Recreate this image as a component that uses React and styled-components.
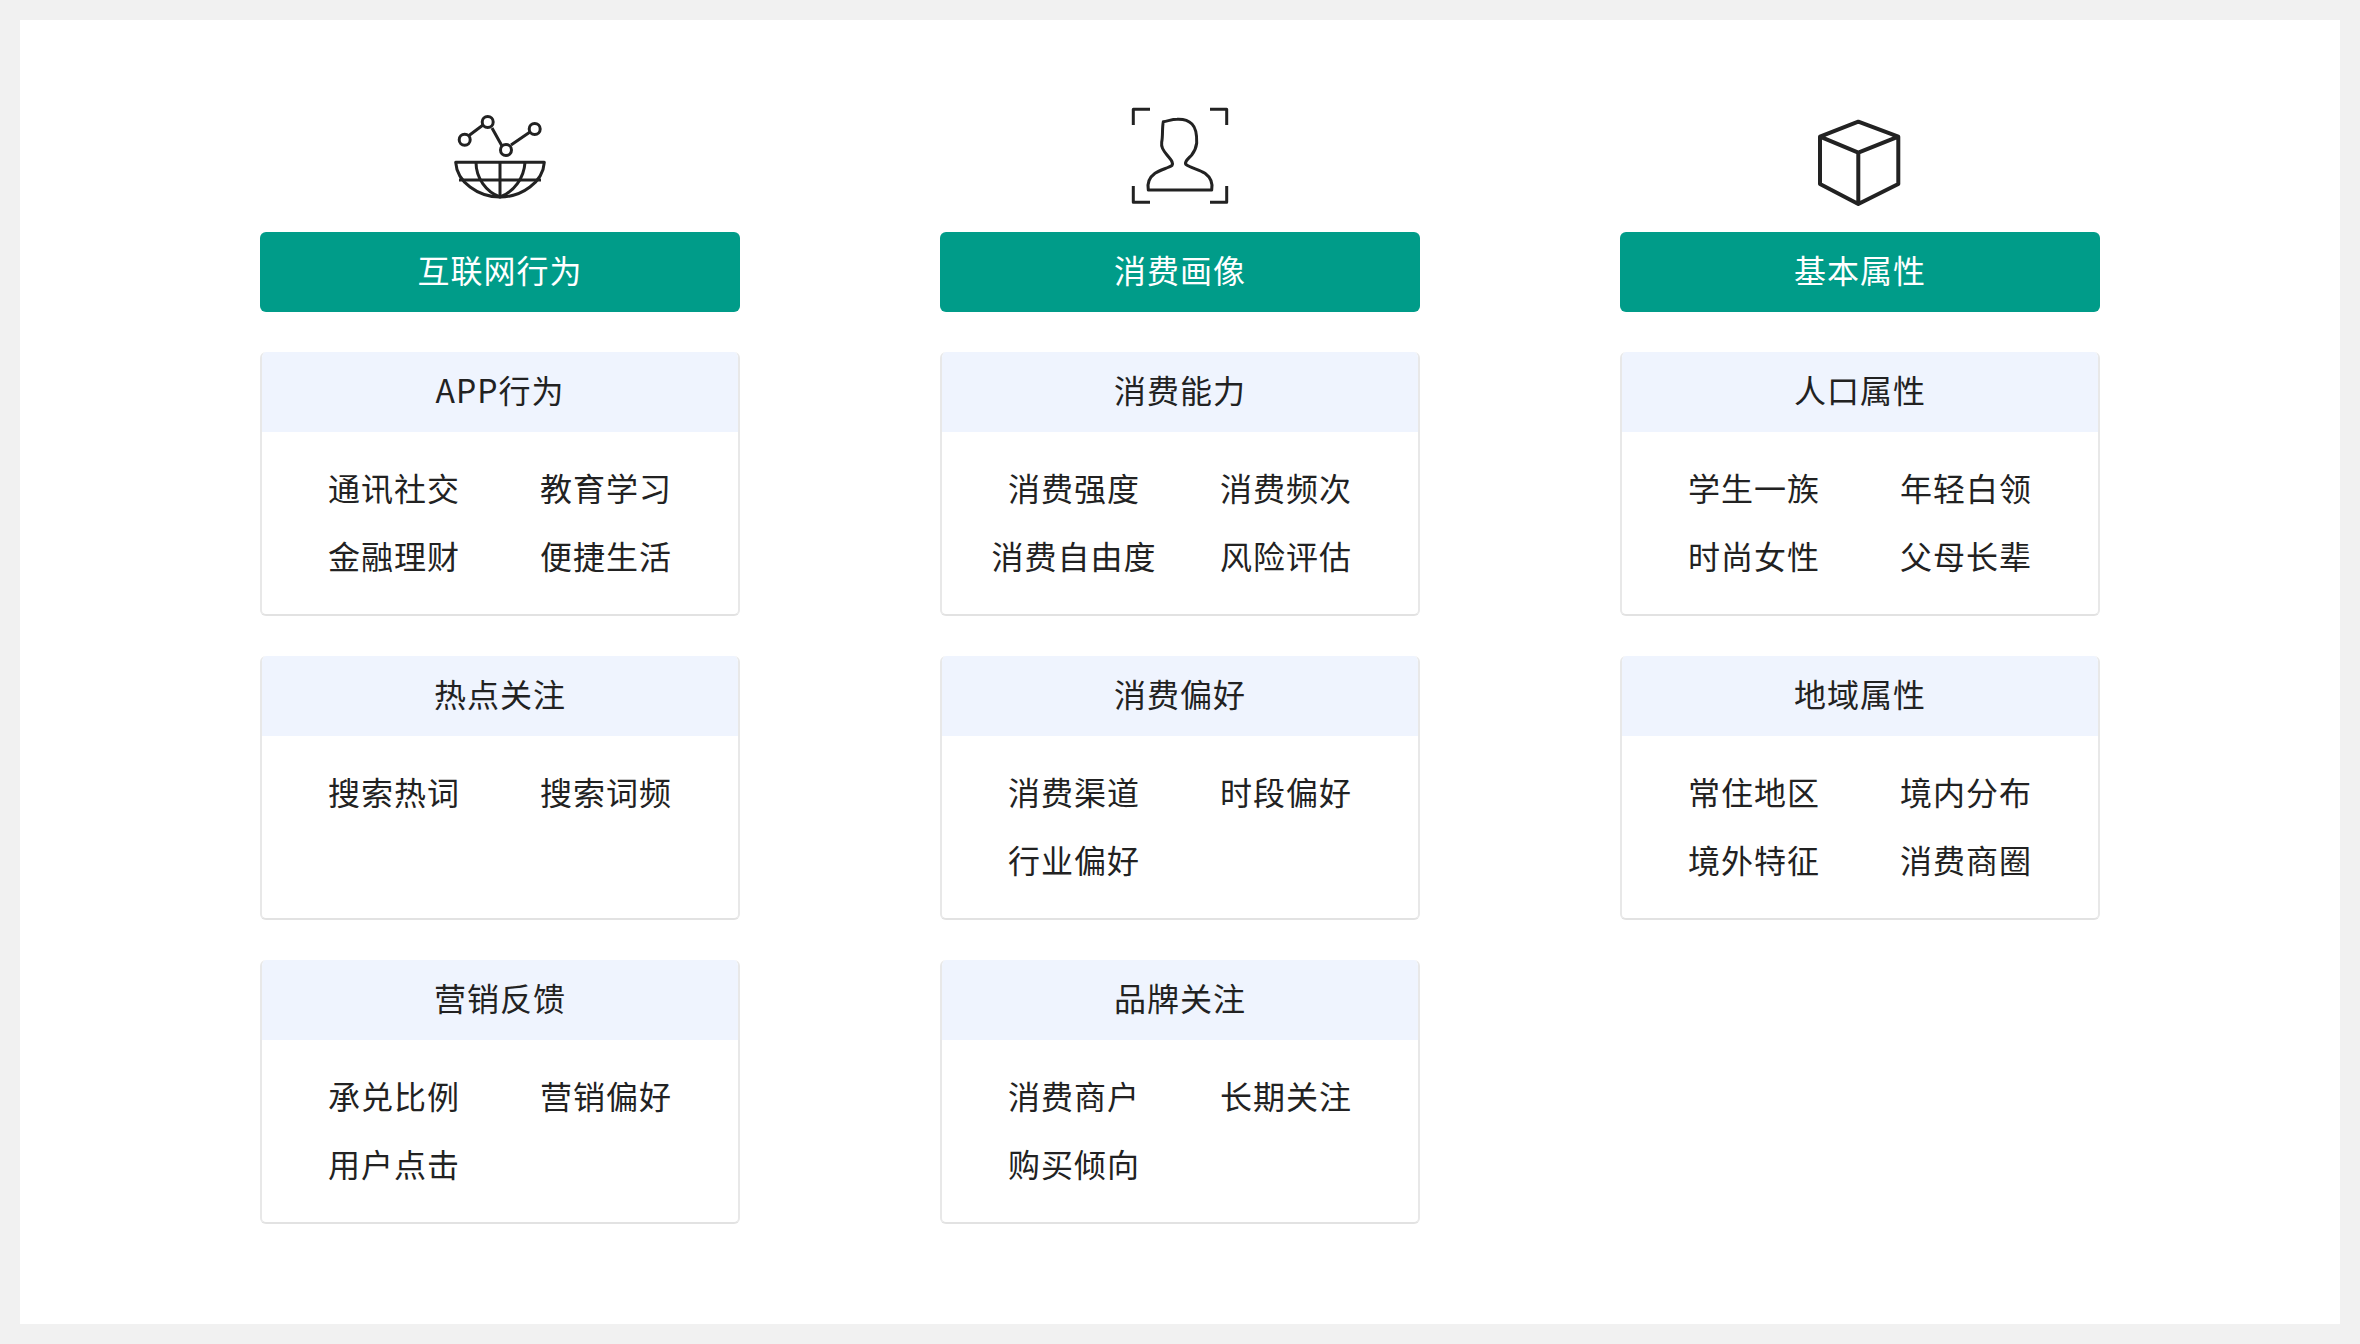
import styled, { createGlobalStyle } from "styled-components";

const GlobalStyle = createGlobalStyle`
  html, body {
    margin: 0;
    padding: 0;
    background-color: #f1f1f1;
  }
`;

const Page = styled.div`
  width: 2360px;
  height: 1344px;
  box-sizing: border-box;
  padding: 20px;
  font-family: "Noto Sans CJK SC", "Noto Sans", sans-serif;
  color: #222;
`;

const Panel = styled.main`
  height: 100%;
  box-sizing: border-box;
  padding: 70px 240px 0;
  background-color: #fff;
  display: grid;
  grid-template-columns: repeat(3, 480px);
  justify-content: space-between;
  align-items: start;
`;

const Column = styled.section`
  display: flex;
  flex-direction: column;
  align-items: center;
`;

const Icon = styled.svg`
  display: block;
  width: 160px;
  height: 130px;
  margin-bottom: 12px;
  fill: none;
  stroke: #222;
  stroke-width: ${(props) => props.$stroke || 3};
  stroke-linejoin: round;
`;

const Banner = styled.h2`
  align-self: stretch;
  height: 80px;
  margin: 0 0 40px;
  border-radius: 6px;
  background-color: #009c89;
  color: #fff;
  font-size: 32px;
  font-weight: 400;
  letter-spacing: 1px;
  line-height: 75px;
  text-align: center;
`;

const Card = styled.article`
  align-self: stretch;
  height: 264px;
  box-sizing: border-box;
  margin-bottom: 40px;
  border: 2px solid #e8e8e8;
  border-top: none;
  border-bottom-color: #e2e2e2;
  border-radius: 6px;
  overflow: hidden;
`;

const CardTitle = styled.h3`
  height: 80px;
  margin: 0 -2px;
  background-color: #eff4fe;
  font-size: 32px;
  font-weight: 400;
  letter-spacing: 1px;
  line-height: 75px;
  text-align: center;
`;

const ItemGrid = styled.ul`
  list-style: none;
  margin: 0;
  padding: 21px 0 0;
  display: grid;
  grid-template-columns: repeat(2, 212px);
  grid-auto-rows: 68px;
  justify-content: center;
`;

const Item = styled.li`
  font-size: 32px;
  letter-spacing: 1px;
  line-height: 68px;
  text-align: center;
`;

const NetworkIcon = () => (
  <Icon viewBox="0 0 160 130">
    <path d="M49 45.5 63 35M72 38 82 56M91 55 110 42" />
    <circle cx="44.7" cy="49.7" r="5.5" />
    <circle cx="67.7" cy="32" r="5.5" />
    <circle cx="86" cy="60" r="5.5" />
    <circle cx="114.7" cy="39" r="5.5" />
    <path d="M35.7 72.3H124.3C123 92 102 107 80 107S37 92 35.7 72.3Z" />
    <path d="M80 72.3V107M39 90H121" />
    <path d="M56 72.3C56 88 66 102 80 107C94 102 104 88 105 72.3" />
  </Icon>
);

const PortraitIcon = () => (
  <Icon viewBox="0 0 160 130">
    <path d="M33.3 35V19.3H50M110 19.3H126.7V35M33.3 96V112.3H50M110 112.3H126.7V96" />
    <path d="M48.3 100C47 93 50 87 55 83.3C60 80 68 78 72 75.5C74 72 70 69 67 65C63 60 61 57 61.7 52C63 46 62 38 63.3 31.7C68 31 72 29.3 77 29.3C83 29 88 30 92 34C96 38 97 43 96.7 53C96 59 94 62 91.7 65C88 69 84 72 86 74.5C91 78 99 79.5 105 83.3C110 87 113 93 111.7 100Z" />
  </Icon>
);

const CubeIcon = () => (
  <Icon viewBox="0 0 160 130" $stroke={4}>
    <path d="M78.3 31.7 40 46.7V94L78.3 114 118.3 94V46.7ZM40 46.7 78.3 62.7 118.3 46.7M78.3 62.7V114" />
  </Icon>
);

const columns = [
  {
    title: "互联网行为",
    icon: <NetworkIcon />,
    cards: [
      { title: "APP行为", items: ["通讯社交", "教育学习", "金融理财", "便捷生活"] },
      { title: "热点关注", items: ["搜索热词", "搜索词频"] },
      { title: "营销反馈", items: ["承兑比例", "营销偏好", "用户点击"] },
    ],
  },
  {
    title: "消费画像",
    icon: <PortraitIcon />,
    cards: [
      { title: "消费能力", items: ["消费强度", "消费频次", "消费自由度", "风险评估"] },
      { title: "消费偏好", items: ["消费渠道", "时段偏好", "行业偏好"] },
      { title: "品牌关注", items: ["消费商户", "长期关注", "购买倾向"] },
    ],
  },
  {
    title: "基本属性",
    icon: <CubeIcon />,
    cards: [
      { title: "人口属性", items: ["学生一族", "年轻白领", "时尚女性", "父母长辈"] },
      { title: "地域属性", items: ["常住地区", "境内分布", "境外特征", "消费商圈"] },
    ],
  },
];

function App() {
  return (
    <Page>
      <GlobalStyle />
      <Panel>
        {columns.map((column) => (
          <Column key={column.title}>
            {column.icon}
            <Banner>{column.title}</Banner>
            {column.cards.map((card) => (
              <Card key={card.title}>
                <CardTitle>{card.title}</CardTitle>
                <ItemGrid>
                  {card.items.map((item) => (
                    <Item key={item}>{item}</Item>
                  ))}
                </ItemGrid>
              </Card>
            ))}
          </Column>
        ))}
      </Panel>
    </Page>
  );
}

export default App;
